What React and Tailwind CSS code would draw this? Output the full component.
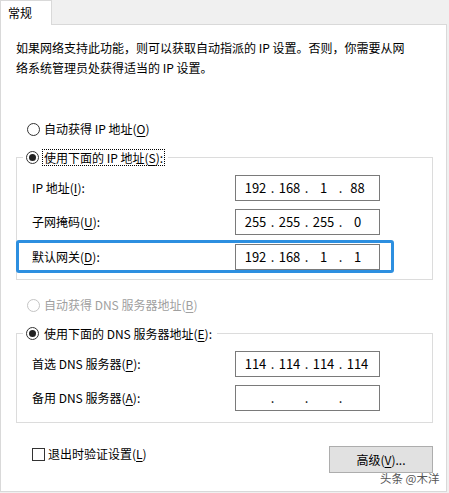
import React from 'react';

const FONT = "font-['Noto_Sans_CJK_SC','Noto_Sans',sans-serif]";

const Key = ({ children }) => <span className="underline underline-offset-2">{children}</span>;

const Radio = ({ checked, disabled }) => (
    <div
        className={`w-[13px] h-[13px] shrink-0 rounded-full border bg-white flex items-center justify-center ${disabled ? 'border-[#c4c4c4]' : 'border-[#333333]'}`}
    >
        {checked && <div className="w-[7px] h-[7px] rounded-full bg-[#222222]"></div>}
    </div>
);

// IP address control: four fields separated by dots
const IpBox = ({ parts }) => (
    <div className="w-[145px] h-[26px] border border-[#7a7a7a] bg-white flex items-center pl-[7px] text-[13px] text-black">
        {parts.map((p, i) => (
            <React.Fragment key={i}>
                <span className="w-[25px] text-center leading-[20px]">{p}</span>
                {i < 3 && <span className="w-[9px] text-center leading-[20px]">.</span>}
            </React.Fragment>
        ))}
    </div>
);

const Row = ({ label, parts, className = 'mt-[8px]' }) => (
    <div className={`flex items-center h-[26px] pl-[15px] ${className}`}>
        <span className="w-[203px] text-[12px] leading-[20px] whitespace-nowrap">{label}</span>
        <IpBox parts={parts} />
    </div>
);

export default function App() {
    return (
        <div className={`w-[449px] h-[493px] bg-[#f0f0f0] relative overflow-hidden text-black ${FONT}`}>
            {/* Tab strip */}
            <div className="h-[24px] flex">
                <div className="w-[52px] h-[25px] bg-white border-l border-t border-r border-[#d9d9d9] relative z-10 pl-[7px] pt-[2px] text-[12px] leading-[20px]">
                    常规
                </div>
            </div>

            {/* Panel */}
            <div className="w-[447px] h-[468px] bg-white border border-[#d9d9d9] pl-[15px] pt-[13px] flex flex-col">
                <p className="text-[12px] leading-[20px] whitespace-nowrap">
                    如果网络支持此功能，则可以获取自动指派的 IP 设置。否则，你需要从网
                    <br />
                    络系统管理员处获得适当的 IP 设置。
                </p>

                <div className="mt-[41px] h-[20px] flex items-center pl-[11px] gap-[4px] text-[12px] leading-[20px]">
                    <Radio />
                    <span>自动获得 IP 地址(<Key>O</Key>)</span>
                </div>

                {/* Manual IP group */}
                <fieldset className="mt-[8px] w-[417px] border border-[#dcdcdc] pb-[6px]">
                    <legend className="ml-[6px] px-[3px] h-[20px] flex items-center gap-[3px] text-[12px] bg-white">
                        <Radio checked />
                        <span className="h-[17px] flex items-center px-[1px] border border-dotted border-black leading-[15px]">
                            使用下面的 IP 地址(<Key>S</Key>):
                        </span>
                    </legend>
                    <Row label={<>IP 地址(<Key>I</Key>):</>} parts={['192', '168', '1', '88']} />
                    <Row label={<>子网掩码(<Key>U</Key>):</>} parts={['255', '255', '255', '0']} />
                    <div className="mt-[5px] -ml-[1px] w-[378px] h-[33px] border-[3px] border-[#2d8fe0] rounded-[3px] flex items-center pl-[13px]">
                        <span className="w-[203px] text-[12px] leading-[20px] whitespace-nowrap">
                            默认网关(<Key>D</Key>):
                        </span>
                        <IpBox parts={['192', '168', '1', '1']} />
                    </div>
                </fieldset>

                <div className="mt-[15px] h-[20px] flex items-center pl-[11px] gap-[4px] text-[12px] leading-[20px] text-[#a0a0a0]">
                    <Radio disabled />
                    <span>自动获得 DNS 服务器地址(<Key>B</Key>)</span>
                </div>

                {/* Manual DNS group */}
                <fieldset className="mt-[8px] w-[417px] border border-[#dcdcdc] pb-[11px]">
                    <legend className="ml-[6px] px-[3px] h-[20px] flex items-center gap-[3px] text-[12px] bg-white">
                        <Radio checked />
                        <span className="h-[17px] flex items-center px-[1px] border border-transparent leading-[15px]">
                            使用下面的 DNS 服务器地址(<Key>E</Key>):
                        </span>
                    </legend>
                    <Row label={<>首选 DNS 服务器(<Key>P</Key>):</>} parts={['114', '114', '114', '114']} />
                    <Row label={<>备用 DNS 服务器(<Key>A</Key>):</>} parts={['', '', '', '']} />
                </fieldset>

                {/* Footer */}
                <div className="mt-[21px] w-[417px] flex items-start justify-between">
                    <div className="h-[20px] flex items-center pl-[16px] gap-[3px] text-[12px] leading-[20px]">
                        <div className="w-[13px] h-[13px] border border-[#333333] bg-white"></div>
                        <span>退出时验证设置(<Key>L</Key>)</span>
                    </div>
                    <button className="mt-[2px] w-[104px] h-[27px] bg-[#e1e1e1] border border-[#adadad] text-[12px] leading-[20px] flex items-center justify-center">
                        高级(<Key>V</Key>)...
                    </button>
                </div>
            </div>

            {/* Watermark */}
            <div className="absolute left-[380px] top-[470px] text-[11.5px] leading-[16px] text-[#555555] whitespace-nowrap [text-shadow:0_0_2px_#ffffff]">
                头条 @木洋
            </div>
        </div>
    );
}
